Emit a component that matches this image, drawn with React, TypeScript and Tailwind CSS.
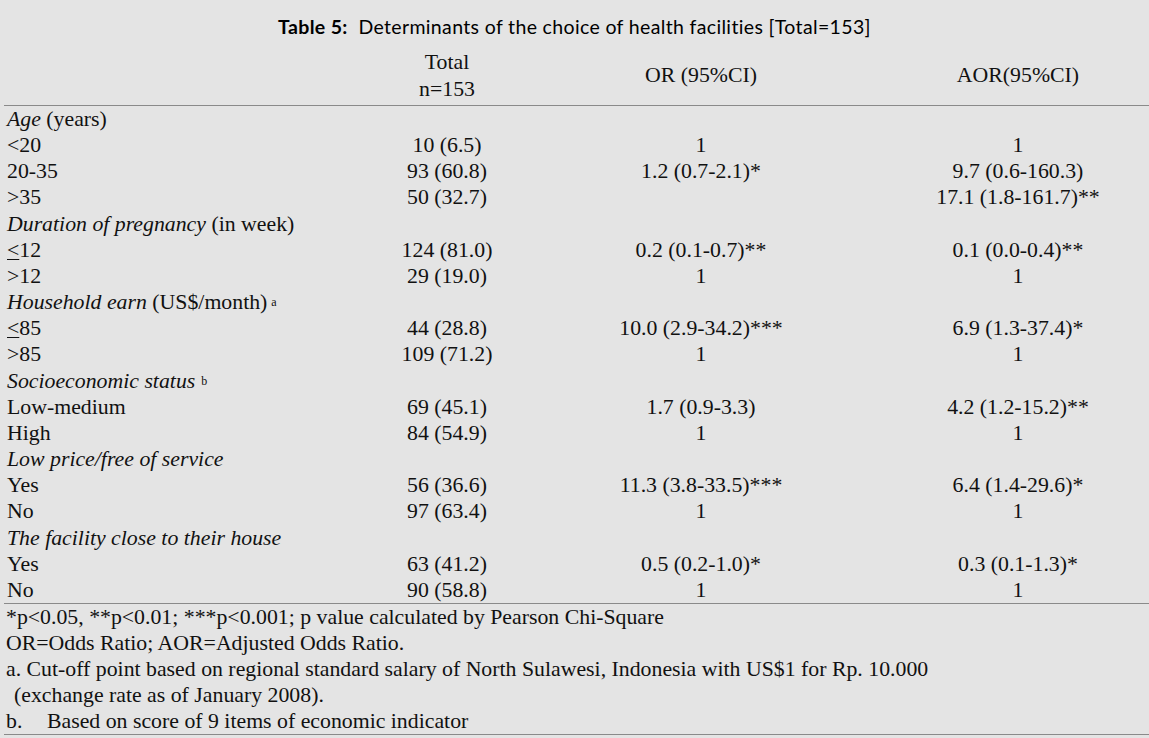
import React from "react";

type Row =
  | { kind: "group"; label: React.ReactNode }
  | { kind: "data"; label: React.ReactNode; total: string; or: string; aor: string };

const U = ({ children }: { children: React.ReactNode }) => (
  <span className="underline underline-offset-[2px] decoration-1">{children}</span>
);

const rows: Row[] = [
  { kind: "group", label: (<><i>Age</i> (years)</>) },
  { kind: "data", label: "<20", total: "10 (6.5)", or: "1", aor: "1" },
  { kind: "data", label: "20-35", total: "93 (60.8)", or: "1.2 (0.7-2.1)*", aor: "9.7 (0.6-160.3)" },
  { kind: "data", label: ">35", total: "50 (32.7)", or: "", aor: "17.1 (1.8-161.7)**" },
  { kind: "group", label: (<><i>Duration of pregnancy</i> (in week)</>) },
  { kind: "data", label: (<><U>&lt;</U>12</>), total: "124 (81.0)", or: "0.2 (0.1-0.7)**", aor: "0.1 (0.0-0.4)**" },
  { kind: "data", label: ">12", total: "29 (19.0)", or: "1", aor: "1" },
  { kind: "group", label: (<><i>Household earn</i> (US$/month)<sup className="text-[12px] ml-[4px] relative top-[-3px]">a</sup></>) },
  { kind: "data", label: (<><U>&lt;</U>85</>), total: "44 (28.8)", or: "10.0 (2.9-34.2)***", aor: "6.9 (1.3-37.4)*" },
  { kind: "data", label: ">85", total: "109 (71.2)", or: "1", aor: "1" },
  { kind: "group", label: (<><i>Socioeconomic status</i><sup className="text-[12px] ml-[6px] relative top-[-3px]">b</sup></>) },
  { kind: "data", label: "Low-medium", total: "69 (45.1)", or: "1.7 (0.9-3.3)", aor: "4.2 (1.2-15.2)**" },
  { kind: "data", label: "High", total: "84 (54.9)", or: "1", aor: "1" },
  { kind: "group", label: <i>Low price/free of service</i> },
  { kind: "data", label: "Yes", total: "56 (36.6)", or: "11.3 (3.8-33.5)***", aor: "6.4 (1.4-29.6)*" },
  { kind: "data", label: "No", total: "97 (63.4)", or: "1", aor: "1" },
  { kind: "group", label: <i>The facility close to their house</i> },
  { kind: "data", label: "Yes", total: "63 (41.2)", or: "0.5 (0.2-1.0)*", aor: "0.3 (0.1-1.3)*" },
  { kind: "data", label: "No", total: "90 (58.8)", or: "1", aor: "1" },
];

const cols = "grid grid-cols-[340px_214px_294px_301px]";

const Rule = () => <div className="ml-[4px] h-px bg-[#8a8a8a]" />;

export default function App() {
  return (
    <div className="w-[1149px] h-[738px] overflow-hidden bg-[#e4e4e4] text-[#111] font-['Liberation_Serif',serif] text-[21.8px]">
      <div className="pt-[14px] h-[40px] leading-[26px] text-center text-[19.5px] tracking-[0.35px] text-black font-['Lato','Open_Sans',sans-serif]">
        <span className="font-bold">Table 5:</span>&nbsp; Determinants of the choice of health facilities [Total=153]
      </div>
      <div className={`${cols} h-[65px] pt-[9px] leading-[27px]`}>
        <div />
        <div className="text-center">
          <div>Total</div>
          <div>n=153</div>
        </div>
        <div className="text-center self-center pb-[3px]">OR (95%CI)</div>
        <div className="text-center self-center pl-[39px] pb-[3px]">AOR(95%CI)</div>
      </div>
      <Rule />
      <div>
        {rows.map((r, i) =>
          r.kind === "group" ? (
            <div key={i} className="h-[26.17px] leading-[26.17px] pl-[7px] whitespace-nowrap">
              {r.label}
            </div>
          ) : (
            <div key={i} className={`${cols} h-[26.17px] leading-[26.17px] whitespace-nowrap`}>
              <div className="pl-[7px]">{r.label}</div>
              <div className="text-center">{r.total}</div>
              <div className="text-center">{r.or}</div>
              <div className="text-center pl-[39px]">{r.aor}</div>
            </div>
          )
        )}
      </div>
      <Rule />
      <div className="pl-[6px] leading-[26px] whitespace-nowrap">
        <div>*p&lt;0.05, **p&lt;0.01; ***p&lt;0.001; p value calculated by Pearson Chi-Square</div>
        <div>OR=Odds Ratio; AOR=Adjusted Odds Ratio.</div>
        <div>a. Cut-off point based on regional standard salary of North Sulawesi, Indonesia with US$1 for Rp. 10.000</div>
        <div className="pl-[8px]">(exchange rate as of January 2008).</div>
        <div className="flex">
          <span className="w-[41px]">b.</span>
          <span>Based on score of 9 items of economic indicator</span>
        </div>
      </div>
      <Rule />
    </div>
  );
}
